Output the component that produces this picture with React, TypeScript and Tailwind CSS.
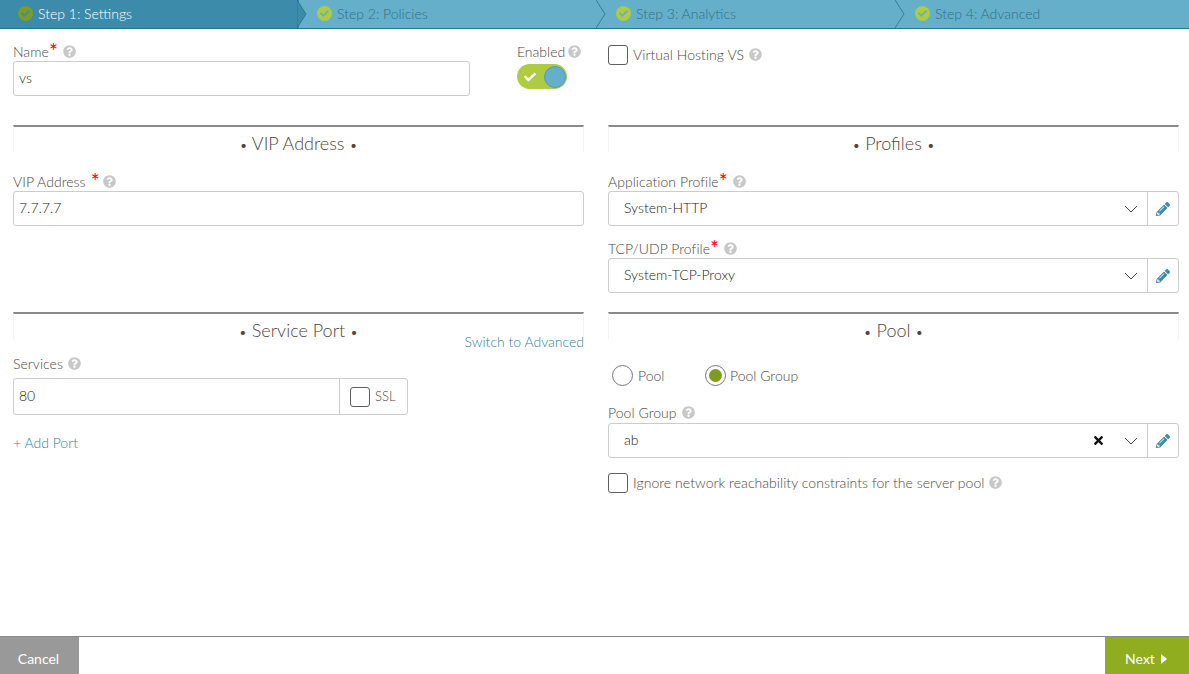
import { FaCheck, FaPencilAlt, FaQuestionCircle, FaTimes } from "react-icons/fa";

const steps = ["Step 1: Settings", "Step 2: Policies", "Step 3: Analytics", "Step 4: Advanced"];

const Help = () => <FaQuestionCircle size={13} className="shrink-0 text-[#c8c8c8]" />;

const Req = () => (
  <span className="text-[#f00] text-[21px] leading-[14px] h-[14px] font-normal translate-y-[3px]">*</span>
);

const Checkbox = () => (
  <span className="block w-[20px] h-[20px] shrink-0 rounded-[3px] border border-[#5f5f5f] bg-white" />
);

const Radio = ({ on = false }: { on?: boolean }) => (
  <span className="flex w-[21px] h-[21px] rounded-full border border-[#777] items-center justify-center">
    {on && <span className="block w-[13px] h-[13px] rounded-full bg-[#7f9c1e]" />}
  </span>
);

const SectionTitle = ({ title }: { title: string }) => (
  <div className="h-[27px] border-t-2 border-[#8a8a8a] border-x border-x-[#f4f4f4] text-center text-[18px] leading-[33px] text-[#54443f]">
    <span className="text-[14px]">•</span> {title} <span className="text-[14px]">•</span>
  </div>
);

const Select = ({ value, clear = false }: { value: string; clear?: boolean }) => (
  <div className="flex h-[35px] border border-[#ccc] rounded-[3px] text-[14px] text-[#222]">
    <div className="flex-1 flex items-center pl-[15px] pb-[2px]">{value}</div>
    {clear && <FaTimes size={13} className="text-[#111] self-center mr-[19px]" />}
    <svg width="14" height="8" viewBox="0 0 14 8" className="self-center mr-[9px]">
      <path d="M1 1L7 7L13 1" fill="none" stroke="#444" strokeWidth="1" />
    </svg>
    <div className="w-[31px] border-l border-[#ccc] flex items-center justify-center">
      <FaPencilAlt size={14} className="text-[#3f8bab]" />
    </div>
  </div>
);

const Label = ({ children }: { children: React.ReactNode }) => (
  <div className="flex items-center gap-[5px] h-[20px] text-[14px] text-[#4d4643] tracking-[0.05px]">{children}</div>
);

export default function App() {
  return (
    <div className="h-[674px] flex flex-col bg-white overflow-hidden font-['Lato',sans-serif] font-light">
      <div className="flex h-[29px] shrink-0 bg-[#65afcb] border-b border-[#2b6f88]">
        {steps.map((s, i) => (
          <div
            key={s}
            className={`relative flex shrink-0 items-center gap-[5px] w-[299px] pl-[18px] pb-[1px] text-[14px] ${
              i === 0 ? "bg-[#3c8bab] text-white" : "text-[#2f6f88]"
            }`}
          >
            <span
              className={`flex w-[15px] h-[15px] rounded-full items-center justify-center ${
                i === 0 ? "bg-[#7f9c1e]" : "bg-[#afcb41]"
              }`}
            >
              <FaCheck size={9} className={i === 0 ? "text-[#3c8bab]" : "text-[#65afcb]"} />
            </span>
            {s}
            {i < 3 && (
              <svg width="10" height="28" viewBox="0 0 10 28" className="absolute right-[-8px] top-0 z-10">
                <path
                  d={i === 0 ? "M0 0L9 14L0 28Z" : "M0 0L9 14L0 28"}
                  fill={i === 0 ? "#3c8bab" : "none"}
                  stroke="#2b6f88"
                  strokeWidth="0.8"
                />
              </svg>
            )}
          </div>
        ))}
      </div>

      <div className="flex-1 grid grid-cols-[571px_571px] gap-x-[24px] pl-[13px] content-start">
        <div className="h-[96px] flex pt-[12px]">
          <div className="w-[457px]">
            <Label>
              <span className="flex">
                Name
                <Req />
              </span>
              <Help />
            </Label>
            <input
              readOnly
              value="vs"
              className="w-full h-[35px] border border-[#ccc] rounded-[3px] px-[5px] pb-[2px] text-[14px] text-[#222]"
            />
          </div>
          <div className="ml-[47px]">
            <div className="flex items-center gap-[3px] h-[20px] text-[14px] text-[#4d4643]">
              Enabled <Help />
            </div>
            <div className="mt-[3px] flex items-center w-[50px] h-[25px] rounded-full bg-[#afcb41] pl-[7px] pr-[1px] justify-between">
              <FaCheck size={12} className="text-white" />
              <span className="block w-[22px] h-[22px] rounded-full bg-[#65afcb] border border-[#4f9cc4]" />
            </div>
          </div>
        </div>
        <div className="h-[96px] pt-[15px]">
          <div className="flex items-center gap-[5px] text-[14px] text-[#4d4643] tracking-[0.05px]">
            <Checkbox />
            Virtual Hosting VS <Help />
          </div>
        </div>

        <div className="h-[187px]">
          <SectionTitle title="VIP Address" />
          <div className="mt-[19px]">
            <div className="flex items-center gap-[3px] h-[20px] text-[14px] text-[#4d4643] tracking-[0.05px]">
              <span className="flex gap-[5px]">
                VIP Address
                <Req />
              </span>
              <Help />
            </div>
            <input
              readOnly
              value="7.7.7.7"
              className="w-full h-[35px] border border-[#ccc] rounded-[3px] px-[5px] pb-[2px] text-[14px] text-[#222]"
            />
          </div>
        </div>
        <div className="h-[187px]">
          <SectionTitle title="Profiles" />
          <div className="mt-[19px]">
            <Label>
              <span className="flex">
                Application Profile
                <Req />
              </span>
              <Help />
            </Label>
            <Select value="System-HTTP" />
          </div>
          <div className="mt-[12px]">
            <Label>
              <span className="flex">
                TCP/UDP Profile
                <Req />
              </span>
              <Help />
            </Label>
            <Select value="System-TCP-Proxy" />
          </div>
        </div>

        <div>
          <SectionTitle title="Service Port" />
          <div className="text-right text-[14px] leading-[18px] text-[#2f7f9f] mt-[-6px]">Switch to Advanced</div>
          <div className="mt-[2px]">
            <Label>
              Services <Help />
            </Label>
            <div className="mt-[5px] flex w-[395px] h-[37px] border border-[#ccc] rounded-[3px] text-[14px] text-[#222]">
              <div className="flex-1 flex items-center pl-[5px] pb-[2px]">80</div>
              <div className="w-[68px] border-l border-[#ccc] flex items-center gap-[5px] pl-[10px] text-[#4d4643] text-[13px]">
                <Checkbox />
                SSL
              </div>
            </div>
          </div>
          <div className="mt-[19px] text-[14px] leading-[18px] text-[#2f7f9f]">+ Add Port</div>
        </div>
        <div>
          <SectionTitle title="Pool" />
          <div className="mt-[26px] ml-[4px] flex items-center h-[21px] text-[14px] text-[#4d4643]">
            <Radio />
            <span className="ml-[5px] w-[40px]">Pool</span>
            <span className="ml-[27px]">
              <Radio on />
            </span>
            <span className="ml-[4px]">Pool Group</span>
          </div>
          <div className="mt-[16px]">
            <Label>
              Pool Group <Help />
            </Label>
            <div className="mt-[1px]">
              <Select value="ab" clear />
            </div>
          </div>
          <div className="mt-[14px] flex items-center gap-[5px] text-[14px] text-[#4d4643] tracking-[0.05px]">
            <Checkbox />
            Ignore network reachability constraints for the server pool <Help />
          </div>
        </div>
      </div>

      <div className="h-[38px] shrink-0 flex justify-between border-t border-[#8a8a8a] text-[14px] text-white font-normal">
        <div className="w-[79px] bg-[#999] flex items-center justify-center pt-[6px] pr-[2px]">Cancel</div>
        <div className="w-[84px] bg-[#8fad1f] flex items-center justify-center gap-[6px] pt-[6px] pr-[2px]">
          Next
          <svg width="6" height="10" viewBox="0 0 6 10">
            <path d="M0 0L6 5L0 10Z" fill="white" />
          </svg>
        </div>
      </div>
    </div>
  );
}
